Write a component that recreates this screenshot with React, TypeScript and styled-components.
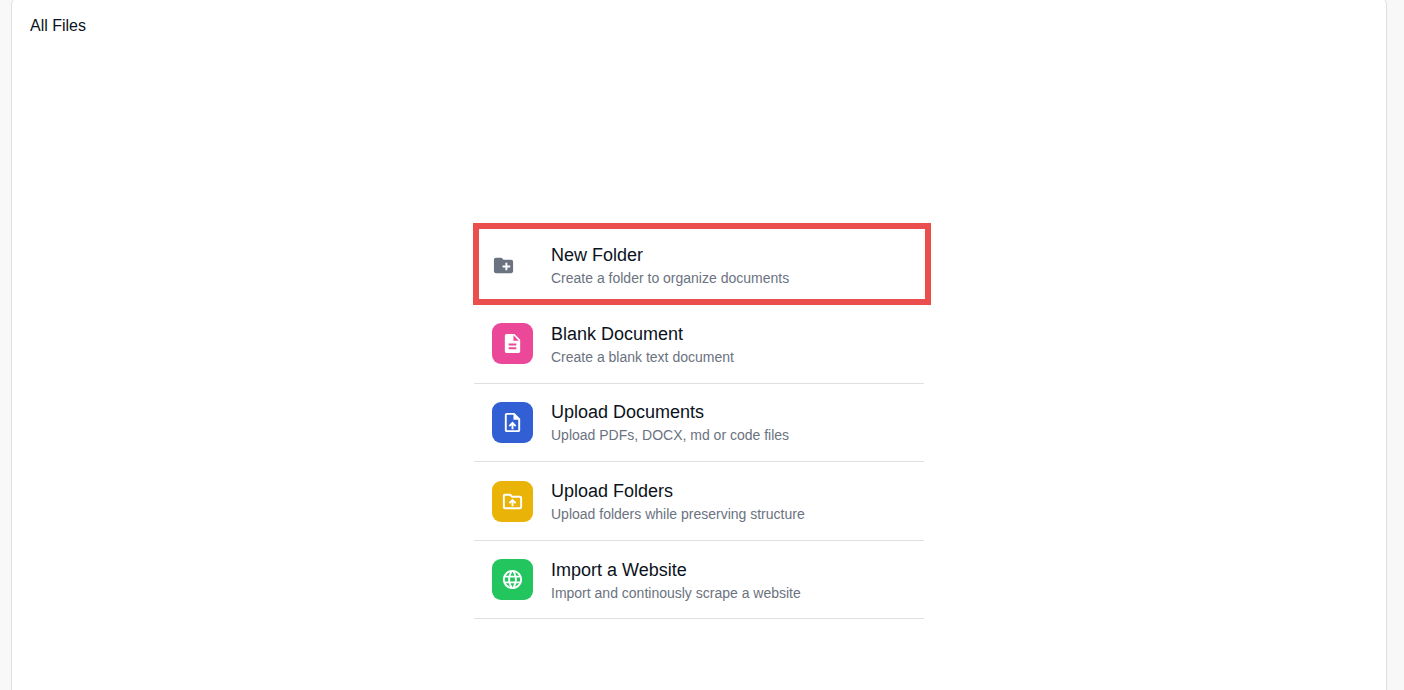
import React from "react";
import styled, { createGlobalStyle } from "styled-components";
import type { IconType } from "react-icons";
import {
  MdCreateNewFolder,
  MdDescription,
  MdLanguage,
  MdOutlineDriveFolderUpload,
  MdOutlineUploadFile,
} from "react-icons/md";

const GlobalStyle = createGlobalStyle`
  * { box-sizing: border-box; }
  body {
    margin: 0;
    background: #f8f8f8;
    color: #0b1220;
    font-family: "Liberation Sans", Arial, sans-serif;
  }
`;

const Page = styled.div`
  display: flex;
  min-height: 100vh;
  padding: 0 17px 0 11px;
  overflow: hidden;
`;

const Panel = styled.main`
  flex: 1;
  display: flex;
  flex-direction: column;
  margin: -4px 0 -12px;
  padding: 20px 18px;
  background: #fff;
  border: 1px solid #e0e0e0;
  border-radius: 9px;
`;

const Title = styled.h1`
  margin: 0;
  font-size: 16px;
  line-height: 18px;
  font-weight: 400;
`;

const Center = styled.div`
  flex: 1;
  display: flex;
  align-items: center;
  justify-content: center;
  padding-top: 130px;
`;

const List = styled.ul`
  display: grid;
  grid-auto-rows: 1fr;
  width: 450px;
  max-width: 100%;
  height: 393px;
  margin: 0;
  padding: 0;
  list-style: none;
`;

const Item = styled.li`
  position: relative;
  display: flex;
  border-bottom: 1px solid #e0e0e0;
`;

const Highlight = styled.span`
  position: absolute;
  inset: -4px -7px -1px -1px;
  border: 6px solid #eb4f4d;
  pointer-events: none;
`;

const Action = styled.button`
  flex: 1;
  display: flex;
  align-items: center;
  gap: 18px;
  padding: 0 18px;
  border: 0;
  background: none;
  color: inherit;
  font: inherit;
  text-align: left;
  cursor: pointer;
`;

const IconTile = styled.span<{ $color?: string }>`
  display: flex;
  align-items: center;
  justify-content: ${(p) => (p.$color ? "center" : "flex-start")};
  width: 41px;
  height: 41px;
  border-radius: 9px;
  background: ${(p) => p.$color ?? "transparent"};
  color: ${(p) => (p.$color ? "#fff" : "#6b7280")};
`;

const Copy = styled.span`
  display: flex;
  flex-direction: column;
`;

const Name = styled.span`
  font-size: 18px;
  line-height: 26px;
`;

const Description = styled.span`
  font-size: 14px;
  line-height: 20px;
  color: #6b7280;
`;

interface Entry {
  name: string;
  description: string;
  icon: IconType;
  color?: string;
  highlighted?: boolean;
}

const entries: Entry[] = [
  { name: "New Folder", description: "Create a folder to organize documents", icon: MdCreateNewFolder, highlighted: true },
  { name: "Blank Document", description: "Create a blank text document", icon: MdDescription, color: "#ec4899" },
  { name: "Upload Documents", description: "Upload PDFs, DOCX, md or code files", icon: MdOutlineUploadFile, color: "#325fd4" },
  { name: "Upload Folders", description: "Upload folders while preserving structure", icon: MdOutlineDriveFolderUpload, color: "#eab308" },
  { name: "Import a Website", description: "Import and continously scrape a website", icon: MdLanguage, color: "#22c55e" },
];

export default function App() {
  return (
    <>
      <GlobalStyle />
      <Page>
        <Panel>
          <Title>All Files</Title>
          <Center>
            <List>
              {entries.map(({ name, description, icon: Icon, color, highlighted }) => (
                <Item key={name}>
                  <Action type="button">
                    <IconTile $color={color}>
                      <Icon size={23} aria-hidden />
                    </IconTile>
                    <Copy>
                      <Name>{name}</Name>
                      <Description>{description}</Description>
                    </Copy>
                  </Action>
                  {highlighted && <Highlight />}
                </Item>
              ))}
            </List>
          </Center>
        </Panel>
      </Page>
    </>
  );
}
